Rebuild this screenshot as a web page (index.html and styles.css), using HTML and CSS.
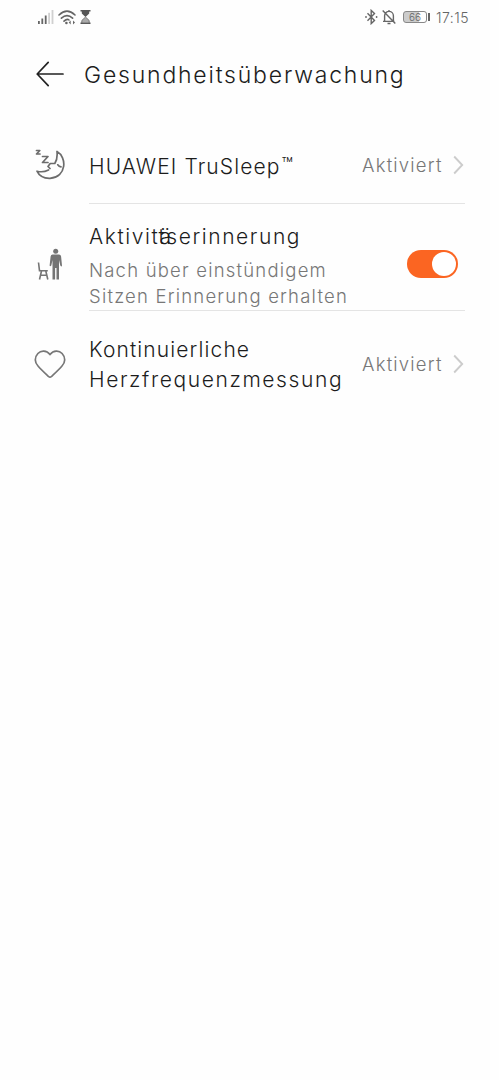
FILE: index.html
```html
<!DOCTYPE html>
<html lang="de">
<head>
<meta charset="utf-8">
<title>Gesundheitsüberwachung</title>
<link rel="stylesheet" href="styles.css">
</head>
<body>
<div class="status">
  <div class="status-left">
    <svg width="16" height="14" viewBox="0 0 16 14"><g fill="#666"><rect x="0" y="11" width="1.8" height="3"/><rect x="3.4" y="8.5" width="1.8" height="5.5"/><rect x="6.8" y="5.5" width="1.8" height="8.5"/></g><g fill="#d0d0d0"><rect x="10.2" y="2.8" width="1.8" height="11.2"/><rect x="13.6" y="0" width="1.8" height="14"/></g></svg>
    <svg width="18" height="15" viewBox="0 0 18 15"><g fill="none" stroke="#666" stroke-width="1.6" stroke-linecap="round"><path d="M1 5Q9-2.6 17 5M3.4 8.2Q9 3 14.6 8.2M6 11.2Q9 8.4 11 10"/></g><circle cx="8.4" cy="13" r="1.3" fill="#666"/><path d="M10.7 12.5l2-2v4zM17 12.5l-2-2v4z" fill="#666"/></svg>
    <svg width="11" height="14" viewBox="0 0 11 14"><path d="M.5.8h10M.5 13.2h10" stroke="#555" stroke-width="1.5"/><path d="M1.8 1v2.500L5.500 7 9.200 3.500V1z" fill="#555"/><path d="M1.800 13v-2.500L5.500 7l3.700 3.500V13z" fill="#aaa" stroke="#666" stroke-width=".8"/></svg>
  </div>
  <div class="status-right">
    <svg width="13" height="16" viewBox="0 0 13 16"><path d="M2.5 4.2l7 7.2-3.3 3.2V1.4l3.3 3.2-7 7.2" fill="none" stroke="#666" stroke-width="1.4"/><circle cx="1" cy="8" r=".9" fill="#666"/><circle cx="11.6" cy="8" r=".9" fill="#666"/></svg>
    <svg width="14" height="16" viewBox="0 0 14 16"><path d="M2.6 12V6.800A4.400 4.400 0 0 1 11.400 6.800V12M1 12.400h11.500M7 2.400V1M5.500 14.500h3M.7 1.500l12.600 13" fill="none" stroke="#666" stroke-width="1.400"/></svg>
    <div class="battery"><span>66</span></div>
    <span class="clock">17:15</span>
  </div>
</div>
<header class="header">
  <svg width="28" height="26" viewBox="0 0 28 26"><path d="M12.2 1.4L1.2 13l11 11.6M1.2 13H27" fill="none" stroke="#222" stroke-width="1.7" stroke-linecap="round" stroke-linejoin="round"/></svg>
  <h1>Gesundheitsüberwachung</h1>
</header>
<main class="list">
  <section class="row row-sleep">
    <div class="icon"><svg width="30" height="31" viewBox="0 0 30 31"><g fill="none" stroke="#6c6c6c" stroke-width="1.7" stroke-linecap="round" stroke-linejoin="round"><path d="M22 2.500C32 8 32 28 15 29.300C8 29.500 4 26.500 2 22.200C6 23.200 10 22.800 13.500 21M22 2.500C22.500 7 22 11 19.800 14.500L15.200 14.500L13 17.500L15 19.500M22.800 15.800Q24 17.600 26 17.900"/><path d="M1.500 1.500h3.300L1.500 5h3.500M7.500 7.500h5.500l-5.500 6H13"/></g></svg></div>
    <h2 class="sleep">HUAWEI TruSleep<span class="tm">™</span></h2>
    <span class="state">Aktiviert</span>
    <svg class="chevron" width="11" height="20" viewBox="0 0 11 20"><path d="M1.200 1.500L9.200 10l-8 8.500" fill="none" stroke="#ccc" stroke-width="1.900"/></svg>
  </section>
  <section class="row row-activity">
    <div class="icon"><svg width="26" height="33" viewBox="0 0 26 33"><g fill="#757575"><circle cx="18.700" cy="3.200" r="2.500"/><path d="M15.500 6.500h6.500q1.800 0 2.100 2l.9 9q-.4 1.800-1.700 0L22 12v19.500h-2.500V20h-1.400v11.500h-2.600V12l-1.200 5.500q-1.300 1.600-1.700 0l1-9q.3-2 1.900-2z"/></g><path d="M1.500 14.500l1 8.200h8.300M4.500 23L2.500 31.500M8.800 23l2 8.500M4 27.300h6" fill="none" stroke="#757575" stroke-width="1.600"/></svg></div>
    <div class="label">
      <h2 class="activity">Aktivit<span class="umlaut">ä</span><span class="overlap">t</span>serinnerung</h2>
      <p><span class="sub-one">Nach über einstündigem</span><br><span class="sub-two">Sitzen Erinnerung erhalten</span></p>
    </div>
    <div class="toggle"><div class="knob"></div></div>
  </section>
  <section class="row row-heart">
    <div class="icon"><svg width="32" height="29" viewBox="0 0 32 29"><path d="M16 4.500C12.500.2 7 .2 3.900 3.500C.2 7.500.7 12.500 4 16C7.500 20 11 23.200 14.500 26.500Q16 27.900 17.500 26.500C21 23.200 24.500 20 28 16C31.300 12.500 31.800 7.500 28.100 3.500C25 .2 19.500.2 16 4.500z" fill="none" stroke="#777" stroke-width="1.700"/></svg></div>
    <h2><span class="heart-one">Kontinuierliche</span><br><span class="heart-two">Herzfrequenzmessung</span></h2>
    <span class="state">Aktiviert</span>
    <svg class="chevron" width="11" height="20" viewBox="0 0 11 20"><path d="M1.200 1.500L9.200 10l-8 8.500" fill="none" stroke="#ccc" stroke-width="1.900"/></svg>
  </section>
</main>
</body>
</html>
```
FILE: styles.css
```css
* { box-sizing: border-box; }
body { margin: 0; background: #fefefe; color: #1c1c1c; font-family: Inter, "Noto Sans", sans-serif; font-weight: 300; }
svg { display: block; flex: none; }
h1, h2, p { margin: 0; font-weight: 300; white-space: nowrap; }
.status { height: 36px; padding: 0 29px 2px 38px; display: flex; justify-content: space-between; align-items: center; }
.status-left { display: flex; align-items: center; gap: 4px; }
.status-right { display: flex; align-items: center; color: #666; }
.status-right svg { margin-right: 4px; }
.battery { width: 24px; height: 12px; border: 1px solid #888; border-radius: 3px; background: linear-gradient(90deg, #ccc 66%, #fff 66%); margin: 0 9px 0 3px; font-size: 10px; line-height: 10px; text-align: center; position: relative; }
.battery::after { content: ""; position: absolute; right: -4px; top: 1px; width: 2px; height: 8px; background: #666; }
.clock { font-size: 14px; width: 34px; letter-spacing: .5px; white-space: nowrap; }
.header { height: 76px; padding: 0 0 1px 36px; display: flex; align-items: center; gap: 20px; }
h1 { font-size: 23px; line-height: 30px; letter-spacing: 1.8px; padding-top: 2px; }
.row { display: flex; margin-right: 34px; }
.icon { width: 89px; padding-left: 35px; flex: none; }
h2 { font-size: 21px; line-height: 30px; flex: 1; }
.row-sleep { height: 92px; align-items: flex-start; position: relative; padding-top: 37px; }
.row-sleep h2 { padding-top: 3px; }
.row-sleep .state { padding-top: 1px; }
.row-sleep .chevron { margin-top: 6px; }
.row-sleep::after, .row-activity::after { content: ""; position: absolute; left: 89px; right: 0; bottom: 0; height: 1px; background: #e4e4e4; }
.sleep { letter-spacing: 1.1px; }
.tm { font-size: 19px; line-height: 1; vertical-align: 3px; letter-spacing: 0; margin-left: 1px; }
.state { font-size: 18.500px; line-height: 30px; color: #777; width: 83px; white-space: nowrap; letter-spacing: 1.2px; }
.chevron { margin: 0 1px 0 8px; }
.row-activity { height: 107px; position: relative; padding-top: 18px; }
.row-activity .icon { padding: 26px 0 0 37px; }
.label { flex: 1; }
.activity { letter-spacing: 1.58px; }
.overlap { margin-left: -14px; }
p { font-size: 18.500px; line-height: 26px; color: #777; padding-top: 5px; }
.sub-one { letter-spacing: 1.2px; }
.sub-two { letter-spacing: 1.2px; }
.toggle { width: 51px; height: 28px; margin: 28px 7px 0 0; border-radius: 14px; background: #fb6522; padding: 2px; display: flex; justify-content: flex-end; }
.knob { width: 24px; height: 24px; border-radius: 50%; background: #fff; }
.row-heart { align-items: center; height: 106px; }
.row-heart .icon { padding-left: 34px; }
.row-heart h2 { padding-top: 2px; }
.heart-one { letter-spacing: 1.12px; }
.heart-two { letter-spacing: 1.6px; }
```
